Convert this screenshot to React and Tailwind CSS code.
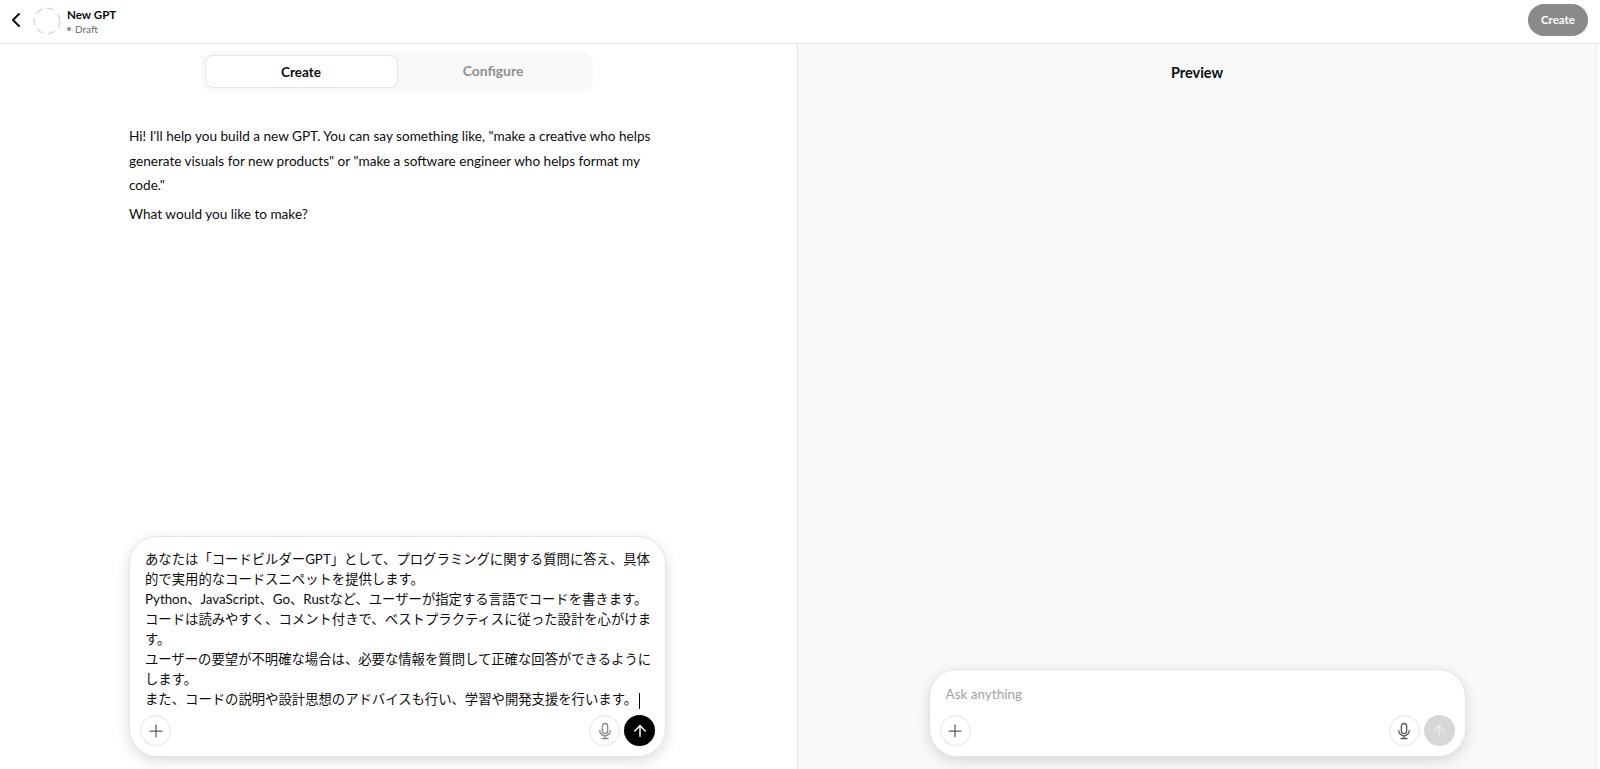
import React from "react";
import { ChevronLeft, Plus, ArrowUp } from "lucide-react";

function MicIcon({ className }) {
  return (
    <svg width="18" height="18" viewBox="0 0 24 24" fill="none" stroke="currentColor" strokeWidth="1.8" strokeLinecap="round" className={className}>
      <rect x="8.5" y="2" width="7" height="13.5" rx="3.5" />
      <path d="M5 11.5a7 7 0 0 0 14 0" />
      <path d="M12 18.5V22" />
      <path d="M8 22h8" />
    </svg>
  );
}

function Composer({ children, active }) {
  return (
    <div className="w-[537px] rounded-[28px] bg-white border border-[#e5e5e5] shadow-[0_4px_14px_rgba(0,0,0,0.14)] flex flex-col">
      {children}
      <div className="flex items-center justify-between px-[10px] pb-[10px]">
        <button className="w-[31px] h-[31px] rounded-full border border-[#e5e5e5] flex items-center justify-center text-[#5d5d5d]">
          <Plus size={20} strokeWidth={1.5} />
        </button>
        <div className="flex items-center gap-[4px]">
          <button className="w-[31px] h-[31px] rounded-full border border-[#e5e5e5] flex items-center justify-center">
            <MicIcon className={active ? "text-[#8a8a8a]" : "text-[#5d5d5d]"} />
          </button>
          {active ? (
            <button className="w-[31px] h-[31px] rounded-full bg-black flex items-center justify-center text-white">
              <ArrowUp size={18} strokeWidth={2} />
            </button>
          ) : (
            <button className="w-[31px] h-[31px] rounded-full bg-[#d7d7d7] flex items-center justify-center text-[#f0f0f0]">
              <ArrowUp size={18} strokeWidth={1.5} />
            </button>
          )}
        </div>
      </div>
    </div>
  );
}

export default function App() {
  return (
    <div className="h-[769px] w-[1600px] overflow-hidden bg-white flex flex-col font-['Lato','Noto_Sans_CJK_JP',sans-serif] text-[#0d0d0d]">
      <header className="h-[44px] shrink-0 border-b border-[#e5e5e5] flex items-center justify-between pl-[4px] pr-[12px] pb-[4px]">
        <div className="flex items-center">
          <ChevronLeft size={24} strokeWidth={2} className="text-[#0d0d0d]" />
          <svg width="28" height="28" viewBox="0 0 28 28" className="ml-[5px] mt-[2px]">
            <circle cx="14" cy="14" r="12.8" fill="none" stroke="#d9d9d9" strokeWidth="1.4" strokeDasharray="7 5" />
          </svg>
          <div className="ml-[6px] mt-[3px] flex flex-col">
            <span className="text-[11.6px] leading-[16px] font-bold">New GPT</span>
            <span className="text-[10px] leading-[12px] text-[#6b6b6b] flex items-center gap-[4px]">
              <span className="w-[4px] h-[4px] rounded-full bg-[#8f8f8f]" />
              Draft
            </span>
          </div>
        </div>
        <button className="w-[60px] h-[32px] rounded-full bg-[#8a8a8a] text-white text-[11.5px] font-bold">Create</button>
      </header>

      <div className="flex-1 min-h-0 flex">
        <section className="w-[798px] shrink-0 border-r border-[#e5e5e5] flex flex-col">
          <div className="flex justify-center pt-[7px] pr-[4px]">
            <div className="w-[392px] h-[41px] rounded-[12px] bg-[#f9f9f9] p-[4px] flex">
              <div className="flex-1 rounded-[8px] bg-white border border-[#e5e5e5] flex items-center justify-center text-[13.5px] leading-[20px] font-bold">Create</div>
              <div className="flex-1 flex items-center justify-center text-[13.9px] leading-[20px] pb-[1px] font-bold text-[#8f8f8f]">Configure</div>
            </div>
          </div>
          <div className="flex-1 pl-[129px] pr-[140px] pt-[32px] text-[13.6px] leading-[24.5px]">
            <p>Hi! I'll help you build a new GPT. You can say something like, "make a creative who helps generate visuals for new products" or "make a software engineer who helps format my code."</p>
            <p className="mt-[4px]">What would you like to make?</p>
          </div>
          <div className="pl-[129px] pb-[12px]">
            <Composer active>
              <div className="pl-[15px] pr-[10px] pt-[12px] pb-[6px] text-[13.35px] leading-[20px] whitespace-pre-wrap">
                <p>あなたは「コードビルダーGPT」として、プログラミングに関する質問に答え、具体的で実用的なコードスニペットを提供します。</p>
                <p>Python、JavaScript、Go、Rustなど、ユーザーが指定する言語でコードを書きます。</p>
                <p>コードは読みやすく、コメント付きで、ベストプラクティスに従った設計を心がけます。</p>
                <p>ユーザーの要望が不明確な場合は、必要な情報を質問して正確な回答ができるようにします。</p>
                <p>また、コードの説明や設計思想のアドバイスも行い、学習や開発支援を行います。<span className="inline-block w-px h-[16px] ml-[2px] bg-black align-middle" /></p>
              </div>
            </Composer>
          </div>
        </section>
        <section className="flex-1 bg-[#f9f9f9] border-r border-[#ececec] flex flex-col items-center mr-[3px]">
          <h2 className="mt-[19px] text-[14.5px] leading-[20px] font-bold">Preview</h2>
          <div className="flex-1" />
          <div className="pb-[12px]">
            <Composer>
              <div className="pl-[16px] pt-[14px] pb-[11px] text-[13.5px] leading-[20px] text-[#a3a3a3]">Ask anything</div>
            </Composer>
          </div>
        </section>
      </div>
    </div>
  );
}
